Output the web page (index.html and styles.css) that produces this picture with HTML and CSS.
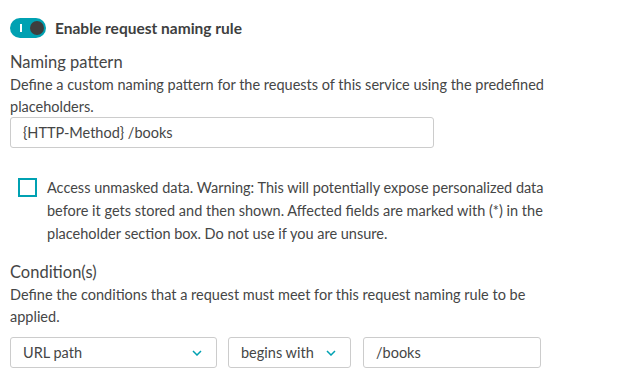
FILE: index.html
```html
<!DOCTYPE html>
<html>
<head>
<meta charset="utf-8">
<link rel="stylesheet" href="styles.css">
</head>
<body>
<div class="page">
  <div class="toggle-row">
    <span class="toggle"><span class="toggle-i"></span><span class="knob"></span></span>
    <span class="toggle-label">Enable request naming rule</span>
  </div>
  <h2 class="heading">Naming pattern</h2>
  <p class="desc">Define a custom naming pattern for the requests of this service using the predefined placeholders.</p>
  <div class="input wide">{HTTP-Method} /books</div>
  <div class="check-row">
    <span class="checkbox"></span>
    <p class="check-text">Access unmasked data. Warning: This will potentially expose personalized data before it gets stored and then shown. Affected fields are marked with (*) in the placeholder section box. Do not use if you are unsure.</p>
  </div>
  <h2 class="heading cond">Condition(s)</h2>
  <p class="desc">Define the conditions that a request must meet for this request naming rule to be applied.</p>
  <div class="cond-row">
    <div class="input select s1"><span>URL path</span><svg class="chev" viewBox="0 0 10 6" width="10" height="6"><path d="M1 1l4 4 4-4" fill="none" stroke="#00a1b2" stroke-width="1.5"/></svg></div>
    <div class="input select s2"><span>begins with</span><svg class="chev" viewBox="0 0 10 6" width="10" height="6"><path d="M1 1l4 4 4-4" fill="none" stroke="#00a1b2" stroke-width="1.5"/></svg></div>
    <div class="input s3">/books</div>
  </div>
</div>
</body>
</html>
```
FILE: styles.css
```css
* { box-sizing: border-box; }
html, body { margin: 0; padding: 0; background: #fff; }
body { font-family: Lato, "Open Sans", sans-serif; color: #454646; font-size: 14.5px; }
.page { padding: 18px 10px 0 10px; width: 600px; }
.toggle-row { display: flex; align-items: center; height: 20px; }
.toggle { position: relative; width: 36px; height: 20px; border-radius: 10px; background: #00a1b2; display: inline-block; }
.toggle-i { position: absolute; left: 10px; top: 6px; width: 2px; height: 8px; background: #fff; }
.knob { position: absolute; right: 2px; top: 3px; width: 14px; height: 14px; border-radius: 50%; background: #3e3e3e; }
.toggle-label { margin-left: 9px; font-weight: 700; font-size: 15.5px; color: #3e3f40; }
.heading { font-weight: 400; font-size: 16.5px; margin: 12px 0 0; line-height: 24px; }
.desc { margin: 0; line-height: 22px; max-width: 560px; }
.input { border: 1px solid #cccccc; border-radius: 3px; height: 31px; padding: 0 12px; display: flex; align-items: center; }
.wide { width: 424px; margin-top: -1px; }
.check-row { display: flex; align-items: flex-start; margin-top: 30px; padding-left: 8px; }
.checkbox { width: 19px; height: 19px; border: 2px solid #00a1b2; flex: none; margin-top: 0; }
.check-text { margin: -2px 0 0 10px; line-height: 23px; width: 540px; }
.cond { margin-top: 15px; }
.cond-row { display: flex; margin-top: 9px; }
.select { justify-content: space-between; }
.s1 { width: 207px; }
.s2 { width: 123px; margin-left: 11px; }
.s3 { width: 178px; margin-left: 12px; }
.chev { margin-right: 2px; }
```
